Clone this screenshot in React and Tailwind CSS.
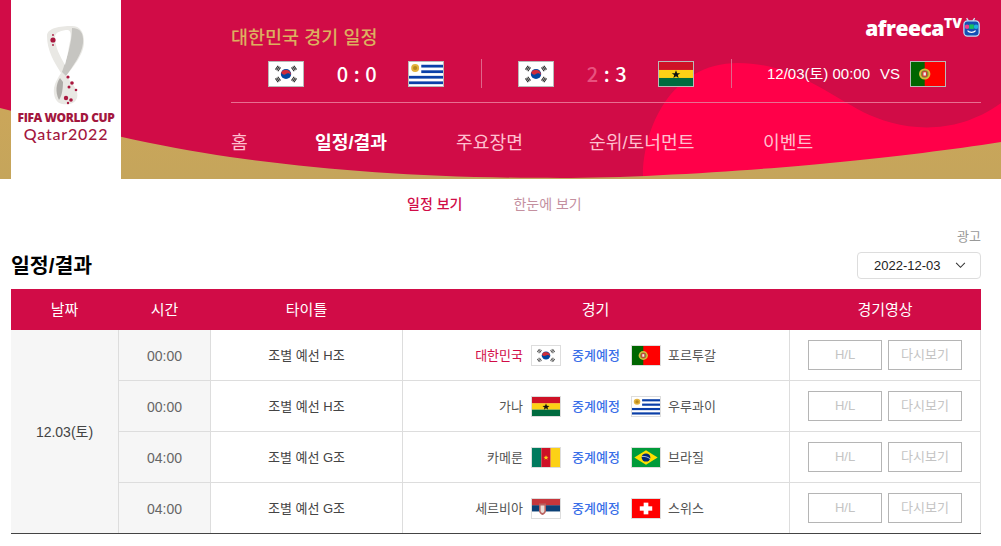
const FONT = "font-['Liberation_Sans','Noto_Sans_CJK_KR',sans-serif]";

const Korea = () => (
  <>
    <rect width="36" height="26" fill="#fff" />
    <g stroke="#222" strokeWidth="1.100">
      <path d="M6.750 8.050l2.900-4M8.050 9l2.900-4M9.350 9.950l2.900-4" />
      <path d="M29.250 8.050l-2.900-4M27.950 9l-2.900-4M26.650 9.950l-2.900-4" />
      <path d="M6.750 17.950l2.900 4M8.050 17l2.900 4M9.350 16.050l2.900 4" />
      <path d="M29.250 17.950l-2.900 4M27.950 17l-2.900 4M26.650 16.050l-2.900 4" />
    </g>
    <circle cx="18" cy="13" r="5.500" fill="#0047a0" />
    <path d="M12.800 11.500a5.500 5.500 0 0 1 10.400 3c-1.300-2.600-3.800-2.600-5.200-1.500s-3.900 1.100-5.200-1.500z" fill="#cd2e3a" />
  </>
);

const Uruguay = () => (
  <>
    <rect width="36" height="26" fill="#fff" />
    <g fill="#0b3fa8">
      <rect x="13" y="3" width="23" height="3" />
      <rect x="13" y="9" width="23" height="3" />
      <rect y="15" width="36" height="3" />
      <rect y="21" width="36" height="3" />
    </g>
    <circle cx="6.500" cy="6.500" r="4.200" fill="#e3b23c" />
    <circle cx="6.500" cy="6.500" r="2.200" fill="#b98a1e" />
  </>
);

const Ghana = () => (
  <>
    <rect width="36" height="9" fill="#ce1126" />
    <rect y="8.600" width="36" height="8.800" fill="#fcd116" />
    <rect y="17.300" width="36" height="8.700" fill="#006b3f" />
    <path d="M18 9l1.200 3.100 3.300.1-2.600 2 .9 3.200-2.800-1.900-2.800 1.900.9-3.200-2.600-2 3.300-.1z" fill="#111" />
  </>
);

const Portugal = () => (
  <>
    <rect width="36" height="26" fill="#f00" />
    <rect width="14.500" height="26" fill="#060" />
    <circle cx="14.500" cy="13" r="6" fill="#d9bc3c" />
    <circle cx="14.500" cy="13" r="4" fill="#7d8f3a" />
    <rect x="12" y="10" width="5" height="6" rx="1.500" fill="#d33" />
    <rect x="13.200" y="11.200" width="2.600" height="3.500" fill="#eee" />
  </>
);

const Cameroon = () => (
  <>
    <rect width="12" height="26" fill="#007a5e" />
    <rect x="12" width="12" height="26" fill="#ce1126" />
    <rect x="24" width="12" height="26" fill="#fcd116" />
    <path d="M18 10l.9 2.100 2.300.1-1.800 1.500.6 2.300-2-1.300-2 1.300.6-2.300-1.800-1.500 2.300-.1z" fill="#fcd116" />
  </>
);

const Brazil = () => (
  <>
    <rect width="36" height="26" fill="#009b3a" />
    <path d="M18 3l15 10-15 10L3 13z" fill="#fedf00" />
    <circle cx="18" cy="13" r="5.600" fill="#002776" />
    <path d="M12.800 11.600c3.600-.4 7.400.6 10.300 3" stroke="#fff" strokeWidth="0.900" fill="none" />
  </>
);

const Serbia = () => (
  <>
    <rect width="36" height="9" fill="#c6363c" />
    <rect y="8.600" width="36" height="8.800" fill="#0c4076" />
    <rect y="17.300" width="36" height="8.700" fill="#fff" />
    <path d="M9 6h9v10c0 3-2.500 5-4.500 6C11.500 21 9 19 9 16z" fill="#b9615f" />
    <path d="M11 9h5v7c0 1.500-1.200 2.500-2.500 3.300C12.200 18.500 11 17.500 11 16z" fill="#e9dfd8" />
  </>
);

const Swiss = () => (
  <>
    <rect width="36" height="26" fill="#f00" />
    <rect x="15" y="5" width="6" height="16" fill="#fff" />
    <rect x="10" y="10" width="16" height="6" fill="#fff" />
  </>
);

const FLAGS = {
  korea: Korea,
  uruguay: Uruguay,
  ghana: Ghana,
  portugal: Portugal,
  cameroon: Cameroon,
  brazil: Brazil,
  serbia: Serbia,
  swiss: Swiss,
};

const Flag = ({ name, small }) => {
  const Shape = FLAGS[name];
  return (
    <span
      className={
        small
          ? "flex h-[21px] w-[30px] shrink-0 border border-[#ddd]"
          : "flex h-[26px] w-[36px] shrink-0 border border-[#b9b9b9]"
      }
    >
      <svg viewBox="0 0 36 26" preserveAspectRatio="none" className="block h-full w-full">
        <Shape />
      </svg>
    </span>
  );
};

const HeaderBackdrop = () => (
  <svg viewBox="0 0 1001 179" preserveAspectRatio="none" className="absolute inset-0 h-[179px] w-[1001px]">
    <defs>
      <linearGradient id="gold" x1="0" y1="0" x2="0" y2="1">
        <stop offset="0" stopColor="#cba65a" />
        <stop offset="1" stopColor="#c5a55b" />
      </linearGradient>
    </defs>
    <rect width="1001" height="179" fill="#d10c47" />
    <path d="M643 176C643 130 670 63 738 63C790 63 825 92 863 112C895 128 950 140 1001 103L1001 179L643 179Z" fill="#ff0049" />
    <path
      d="M0 108C80 128 160 147 230 157C330 171 430 178 560 178C640 178 760 170 830 163C900 156 950 150 1001 142L1001 179L0 179Z"
      fill="url(#gold)"
    />
  </svg>
);

const Emblem = () => (
  <svg viewBox="11 0 110 110" className="block h-[110px] w-[110px]">
    <path
      d="M47 36C47 28 60 26 72 26C80 26 84 32 84 42C84 55 72 68 66 76C74 85 79 92 77 98C75 104 68 105 62 104C56 103 53 96 54 88C55 82 58 78 61 73C54 62 47 50 47 36Z"
      fill="#e9e8e4"
    />
    <path d="M72 28C80 28 84 33 83 43C82 54 73 66 66 76L62 72C66 60 72 44 72 28Z" fill="#c6c5c1" />
    <path d="M55 37C55 32 62 30 68 30C72 31 71 38 69 46C68 54 66 60 65 65C60 56 55 47 55 37Z" fill="#fff" />
    <path d="M60 78C56 84 55 92 59 100C62 96 63 88 63 82Z" fill="#aeaca8" />
    <g fill="#a9183f">
      <circle cx="53" cy="40" r="2.600" />
      <circle cx="53" cy="35" r="0.900" />
      <circle cx="53" cy="45" r="0.900" />
      <circle cx="68" cy="77" r="1.600" />
      <circle cx="72" cy="83" r="1.800" />
      <circle cx="76" cy="90" r="1.300" />
      <circle cx="69" cy="87" r="1.500" />
      <circle cx="66" cy="98" r="2.200" />
      <circle cx="71" cy="100" r="1.800" />
      <circle cx="68" cy="103" r="1.200" />
    </g>
  </svg>
);

const Logo = () => (
  <div className="relative z-10 ml-[11px] flex h-[179px] w-[110px] shrink-0 flex-col items-center bg-white">
    <div className="h-[110px] w-[110px] shrink-0">
      <Emblem />
    </div>
    <div className="mt-[1px] whitespace-nowrap font-['Open_Sans',sans-serif] text-[12px] leading-[13px] font-extrabold tracking-[-0.4px] text-[#a3173e]">
      FIFA WORLD CUP
    </div>
    <div className="mt-[2px] whitespace-nowrap font-['Lato',sans-serif] text-[16px] leading-[16px] font-medium tracking-[0.8px] text-[#a3173e]">
      Qatar2022
    </div>
  </div>
);

const AfreecaLogo = () => (
  <div className="flex items-start justify-end">
    <span className="mt-[1px] font-['Open_Sans',sans-serif] text-[21px] leading-[20px] font-extrabold tracking-[-0.45px] text-white">
      afreeca
    </span>
    <span className="-mt-[1px] font-['Open_Sans',sans-serif] text-[14px] leading-[14px] font-extrabold text-white">
      TV
    </span>
    <svg viewBox="0 0 20 24" className="ml-[1px] h-[22px] w-[18px] shrink-0">
      <path d="M6 4L4 1M11 4L13 1" stroke="#cfe6f7" strokeWidth="1.500" />
      <rect x="1" y="4" width="17" height="17" rx="4" fill="#1450b4" stroke="#bfe0f5" strokeWidth="1.400" />
      <circle cx="4.500" cy="10.500" r="2.500" fill="#ee3f8c" />
      <rect x="7" y="8" width="5" height="5" fill="#16c25f" />
      <circle cx="14.500" cy="10.500" r="2.500" fill="#1ab4dc" />
      <path d="M5 15c2 2.500 7 2.500 9 0" stroke="#fff" strokeWidth="1.200" fill="none" />
    </svg>
  </div>
);

const Match = ({ home, score, away, first }) => (
  <div
    className={`flex h-[29px] items-center border-r border-[#e0668a] ${
      first ? "w-[251px] pl-[37px]" : "w-[250px] pl-[36px]"
    }`}
  >
    <Flag name={home} />
    <div className="flex w-[104px] justify-center pl-[2px] font-['Noto_Sans_CJK_KR',sans-serif] text-[20px] leading-[26px] font-medium tracking-[0.5px] text-white">
      {score}
    </div>
    <Flag name={away} />
  </div>
);

const NAV = [
  { label: "홈", width: "w-[84px]" },
  { label: "일정/결과", width: "w-[141px]", active: true },
  { label: "주요장면", width: "w-[133px]" },
  { label: "순위/토너먼트", width: "w-[174px]" },
  { label: "이벤트", width: "w-[80px]" },
];

const Header = () => (
  <header className="relative flex h-[179px] w-[1001px] overflow-hidden">
    <HeaderBackdrop />
    <Logo />
    <div className="relative ml-[110px] flex w-[750px] flex-col">
      <div className="mt-[17px] flex h-[30px] items-start justify-between">
        <h2 className="mt-[10px] text-[18.500px] leading-[22px] font-medium text-[#dcb05f]">대한민국 경기 일정</h2>
        <AfreecaLogo />
      </div>
      <div className="mt-[12px] flex h-[29px] items-center">
        <Match first home="korea" away="uruguay" score={<span>0 : 0</span>} />
        <Match
          home="korea"
          away="ghana"
          score={
            <span>
              <span className="text-[#e8527f]">2</span> : 3
            </span>
          }
        />
        <div className="flex items-center pl-[35px] text-white">
          <span className="text-[15px] leading-[26px]">12/03(토) 00:00</span>
          <span className="ml-[10px] text-[15px] leading-[26px] font-medium">VS</span>
          <span className="ml-[10px]">
            <Flag name="portugal" />
          </span>
        </div>
      </div>
      <div className="mt-[14px] h-px bg-[#e86f91]" />
      <nav className="mt-[26px] flex h-[28px] items-center">
        {NAV.map((item) => (
          <span
            key={item.label}
            className={`${item.width} whitespace-nowrap text-[18.200px] leading-[28px] ${
              item.active ? "font-bold text-white" : "text-[#ffc0d0]"
            }`}
          >
            {item.label}
          </span>
        ))}
      </nav>
    </div>
  </header>
);

const ROWS = [
  { time: "00:00", title: "조별 예선 H조", home: "대한민국", homeFlag: "korea", away: "포르투갈", awayFlag: "portugal", highlight: true },
  { time: "00:00", title: "조별 예선 H조", home: "가나", homeFlag: "ghana", away: "우루과이", awayFlag: "uruguay" },
  { time: "04:00", title: "조별 예선 G조", home: "카메룬", homeFlag: "cameroon", away: "브라질", awayFlag: "brazil" },
  { time: "04:00", title: "조별 예선 G조", home: "세르비아", homeFlag: "serbia", away: "스위스", awayFlag: "swiss" },
];

const VideoButton = ({ children }) => (
  <span className="flex h-[30px] w-[74px] items-center justify-center border border-[#b5b5b5] text-[13px] text-[#c4c4c4]">
    {children}
  </span>
);

const Row = ({ row, last }) => (
  <div className={`flex ${last ? "h-[50px]" : "h-[51px] border-b border-[#ddd]"}`}>
    <div className="flex w-[93px] items-center justify-center border-x border-[#ddd] bg-[#f6f6f6] pt-[2px] text-[14px] text-[#666]">
      {row.time}
    </div>
    <div className="flex w-[191px] items-center justify-center pt-[2px] text-[13px] text-[#444]">{row.title}</div>
    <div className="flex w-[387px] items-center border-l border-[#ddd] text-[13px]">
      <span className={`w-[120px] pt-[2px] text-right ${row.highlight ? "text-[#d10c47]" : "text-[#555]"}`}>
        {row.home}
      </span>
      <span className="ml-[8px]">
        <Flag name={row.homeFlag} small />
      </span>
      <span className="w-[70px] pt-[2px] text-center font-medium text-[#3a6fe8]">중계예정</span>
      <Flag name={row.awayFlag} small />
      <span className="ml-[7px] pt-[2px] text-[#555]">{row.away}</span>
    </div>
    <div className="flex w-[192px] items-center justify-center gap-[6px] border-x border-[#ddd]">
      <VideoButton>H/L</VideoButton>
      <VideoButton>다시보기</VideoButton>
    </div>
  </div>
);

const COLUMNS = [
  { label: "날짜", width: "w-[107px]" },
  { label: "시간", width: "w-[93px]" },
  { label: "타이틀", width: "w-[191px]" },
  { label: "경기", width: "w-[387px]" },
  { label: "경기영상", width: "w-[192px]" },
];

const Schedule = () => (
  <div className="mx-[11px] w-[970px] border-b border-[#444]">
    <div className="flex h-[41px] items-center bg-[#d10c47] pt-[2px] text-[15px] text-white">
      {COLUMNS.map((col) => (
        <span key={col.label} className={`${col.width} text-center`}>
          {col.label}
        </span>
      ))}
    </div>
    <div className="flex">
      <div className="flex w-[107px] shrink-0 items-center justify-center bg-[#f6f6f6] pt-[2px] text-[14px] text-[#444]">
        12.03(토)
      </div>
      <div className="flex-1">
        {ROWS.map((row, i) => (
          <Row key={i} row={row} last={i === ROWS.length - 1} />
        ))}
      </div>
    </div>
  </div>
);

export default function App() {
  return (
    <div className={`h-[546px] w-[1001px] overflow-hidden bg-white ${FONT}`}>
      <Header />

      {/* tabs */}
      <div className="mt-[15px] flex h-[20px] items-center text-[14px] leading-[20px]">
        <span className="ml-[407px] font-medium text-[#d10c47]">일정 보기</span>
        <span className="ml-[51px] text-[#c4909f]">한눈에 보기</span>
      </div>

      {/* title + date select */}
      <div className="mt-[14px] ml-[11px] flex h-[61px] w-[970px] items-start justify-between">
        <h1 className="mt-[23px] text-[20.500px] leading-[30px] font-bold text-black">일정/결과</h1>
        <div className="flex flex-col items-end">
          <span className="text-[13px] leading-[17px] text-[#999]">광고</span>
          <div className="mt-[7px] flex h-[27px] w-[124px] items-center justify-between rounded-[4px] border border-[#ddd] pr-[14px] pl-[16px] text-[13px] text-[#222]">
            2022-12-03
            <svg viewBox="0 0 12 8" className="h-[7px] w-[11px]">
              <path d="M1 1l5 5 5-5" fill="none" stroke="#333" strokeWidth="1.200" />
            </svg>
          </div>
        </div>
      </div>

      <Schedule />
    </div>
  );
}
